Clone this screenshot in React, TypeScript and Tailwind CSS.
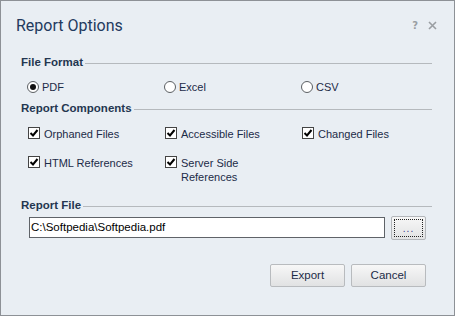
import React from "react";

function Header({ children }: { children: React.ReactNode }) {
  return (
    <div className="flex items-center h-[14px]">
      <span className="font-bold text-[11.5px] text-[#243650] leading-none whitespace-nowrap">{children}</span>
      <div className="flex-1 h-px bg-[#b5b9bd] ml-[2px] mt-[1px]" />
    </div>
  );
}

function Radio({ label, checked }: { label: string; checked?: boolean }) {
  return (
    <div className="w-[137px] shrink-0 flex items-center">
      <div className="w-[12px] h-[12px] rounded-full border border-[#5b5f63] bg-white flex items-center justify-center shrink-0">
        {checked && <div className="w-[6px] h-[6px] rounded-full bg-[#111]" />}
      </div>
      <span className="ml-[3px] leading-none">{label}</span>
    </div>
  );
}

function Check({ lines }: { lines: string[] }) {
  return (
    <div className="w-[137px] shrink-0 flex items-start">
      <div className="w-[12px] h-[12px] border border-[#444] bg-white flex items-center justify-center shrink-0 mt-[-1px]">
        <svg width="10" height="10" viewBox="0 0 10 10">
          <path d="M1.5 5 L4 7.5 L8.5 2" fill="none" stroke="#000" strokeWidth="2" />
        </svg>
      </div>
      <div className="ml-[4px] leading-[14px] -mt-[1px]">
        {lines.map((l) => (
          <div key={l}>{l}</div>
        ))}
      </div>
    </div>
  );
}

export default function App() {
  return (
    <div className="w-[455px] h-[316px] border border-[#8d9196] bg-[#e9eef3] flex flex-col font-['Liberation_Sans',sans-serif] text-[11px] text-[#1c2b47] overflow-hidden">
      <div className="h-[49px] shrink-0 flex items-center pl-[15px] pr-[17px]">
        <span className="font-['Roboto',sans-serif] text-[16px] text-[#233a5e] mt-[1px]">Report Options</span>
        <div className="flex-1" />
        <span className="font-['DejaVu_Sans',sans-serif] font-bold text-[10px] text-[#9a9ea2]">?</span>
        <svg className="ml-[10px]" width="9" height="9" viewBox="0 0 9 9">
          <path d="M1 1 L8 8 M8 1 L1 8" stroke="#9a9ea2" strokeWidth="1.6" />
        </svg>
      </div>
      <div className="pl-[20px] pr-[22px] flex flex-col">
        <div className="mt-[6px]">
          <Header>File Format</Header>
        </div>
        <div className="flex ml-[6px] mt-[11px] h-[12px] items-center">
          <Radio label="PDF" checked />
          <Radio label="Excel" />
          <Radio label="CSV" />
        </div>
        <div className="mt-[9px]">
          <Header>Report Components</Header>
        </div>
        <div className="flex ml-[7px] mt-[12px]">
          <Check lines={["Orphaned Files"]} />
          <Check lines={["Accessible Files"]} />
          <Check lines={["Changed Files"]} />
        </div>
        <div className="flex ml-[7px] mt-[16px]">
          <Check lines={["HTML References"]} />
          <Check lines={["Server Side", "References"]} />
        </div>
        <div className="mt-[15px]">
          <Header>Report File</Header>
        </div>
        <div className="flex items-start ml-[8px] mt-[3px]">
          <div className="w-[356px] h-[21px] mt-[1px] border border-[#5f6368] bg-white flex items-center pl-[1px] text-[11.5px] text-black">
            C:\Softpedia\Softpedia.pdf
          </div>
          <div className="ml-[6px] w-[35px] h-[24px] border border-[#b3b6ba] rounded-[2px] bg-gradient-to-b from-[#f7f7f7] to-[#e2e3e4] p-[2px]">
            <div className="w-full h-full border border-dotted border-[#222] flex items-end justify-center pb-[2px]">
              <span className="text-[#3a3a8a] text-[10px] leading-none tracking-[1px]">...</span>
            </div>
          </div>
        </div>
        <div className="flex justify-end mt-[24px] gap-[6px] mr-[6px]">
          <div className="w-[75px] h-[23px] border border-[#b8bbbe] rounded-[2px] bg-gradient-to-b from-[#f7f7f7] to-[#e1e2e3] flex items-center justify-center text-[11.5px] text-[#1c2b47]">
            Export
          </div>
          <div className="w-[75px] h-[23px] border border-[#b8bbbe] rounded-[2px] bg-gradient-to-b from-[#f7f7f7] to-[#e1e2e3] flex items-center justify-center text-[11.5px] text-[#1c2b47]">
            Cancel
          </div>
        </div>
      </div>
    </div>
  );
}
